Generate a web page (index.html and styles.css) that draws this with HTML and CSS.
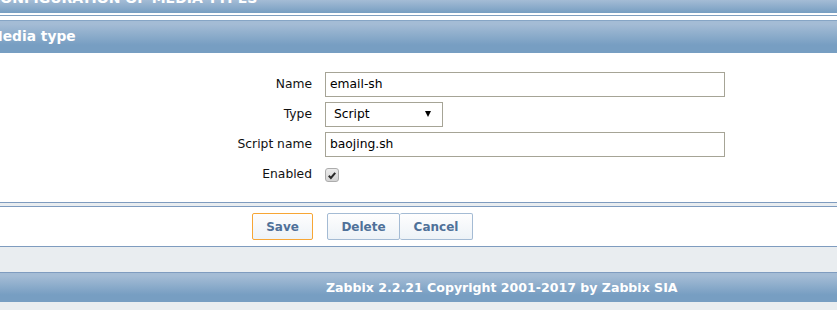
FILE: index.html
```html
<!doctype html>
<html>
    <head>
        <meta charset='utf-8'>
        <title>Configuration of media types</title>
        <link rel="stylesheet" href="styles.css">
    </head>
    <body>
        <div class='page'>
            <div class='title-bar'>
                <h1>CONFIGURATION OF MEDIA TYPES</h1>
            </div>
            <div class='title-line'></div>

            <div class='form-head'>
                <h2>Media type</h2>
            </div>
            <form class='form-body' action=''>
                <div class='row'>
                    <label for='name'>Name</label>
                    <div class='cell'><input id='name' class='text wide' type='text' value='email-sh'></div>
                </div>
                <div class='row'>
                    <label for='type'>Type</label>
                    <div class='cell'>
                        <div class='select' id='type'>
                            <span>Script</span>
                            <span class='arrow'></span>
                        </div>
                    </div>
                </div>
                <div class='row'>
                    <label for='exec'>Script name</label>
                    <div class='cell'><input id='exec' class='text wide' type='text' value='baojing.sh'></div>
                </div>
                <div class='row'>
                    <label>Enabled</label>
                    <div class='cell'>
                        <span class='check'>
                            <svg width='13' height='13' viewBox='0 0 13 13'>
                                <path d='M3 6.8 L5.3 9.2 L10 3.6' fill='none' stroke='#2b2b2b' stroke-width='2.2'/>
                            </svg>
                        </span>
                    </div>
                </div>
            </form>
            <div class='form-gap'></div>
            <div class='form-foot'>
                <button class='btn btn-save'>Save</button>
                <span class='btn-group'>
                    <button class='btn'>Delete</button><button class='btn'>Cancel</button>
                </span>
            </div>

            <div class='footer'>Zabbix 2.2.21 Copyright 2001-2017 by Zabbix SIA</div>
        </div>
    </body>
</html>
```

FILE: styles.css
```css
html,body,h1,h2,p {
    margin:0;
    padding:0;
}
body {
    background:#e9edf0;
    font-family:'DejaVu Sans',Verdana,sans-serif;
    font-size:12px;
    color:#000;
    overflow:hidden;
}
.page {
    width:100%;
}

/* page title, scrolled half out of view */
.title-bar {
    height:13px;
    overflow:hidden;
    background:linear-gradient(#a4bcd5,#779ec2);
    border-bottom:2px solid #fff;
}
.title-bar h1 {
    margin-top:-10px;
    margin-left:-10px;
    font-size:14px;
    line-height:16px;
    color:#fff;
    white-space:nowrap;
}
.title-line {
    height:4px;
    background:#fff;
    border-top:1px solid #7f9fc0;
}

.form-head {
    height:32px;
    background:linear-gradient(#a4bcd5 10%,#779ec2 75%);
    border-top:1px solid #86a5c5;
}
.form-head h2 {
    margin-left:-11px;
    font-size:13.8px;
    line-height:31px;
    color:#fff;
    white-space:nowrap;
}

.form-body {
    background:#fff;
    padding:16px 0 13px;
    border-bottom:1px solid #7f9cbf;
}
.row {
    display:grid;
    grid-template-columns:312px 1fr;
    column-gap:13px;
    height:30px;
    align-items:center;
}
.row label {
    text-align:right;
    color:#111;
    font-size:12.3px;
}
.cell {
    display:flex;
    align-items:center;
}
.text {
    box-sizing:border-box;
    height:25px;
    border:1px solid #a6a496;
    padding:0 4px;
    font-family:'DejaVu Sans',Verdana,sans-serif;
    font-size:12.3px;
    color:#000;
    outline:none;
}
.wide {
    width:400px;
}
.select {
    box-sizing:border-box;
    width:118px;
    height:25px;
    border:1px solid #a6a496;
    padding:0 11px 0 8px;
    font-size:12.3px;
    display:flex;
    align-items:center;
    justify-content:space-between;
}
.arrow {
    width:0;
    height:0;
    border-left:3.5px solid transparent;
    border-right:3.5px solid transparent;
    border-top:6px solid #000;
}
.check {
    box-sizing:border-box;
    width:14px;
    height:14px;
    margin-top:2px;
    border:1px solid #acacac;
    border-radius:3px;
    background:linear-gradient(#ececec,#d4d4d4);
    display:flex;
    align-items:center;
    justify-content:center;
}
.check svg {
    display:block;
}

.form-gap {
    height:3px;
}
.form-foot {
    background:#fff;
    border-top:1px solid #7f9cbf;
    border-bottom:1px solid #7f9cbf;
    height:39px;
    padding-left:252px;
    display:flex;
    align-items:flex-start;
    gap:14px;
}
.btn {
    margin-top:6px;
    height:27px;
    padding:0 12px;
    border:1px solid #a4bbd4;
    border-radius:2px;
    background:linear-gradient(#fefefe,#edf2f7);
    color:#4f7199;
    font-family:'DejaVu Sans',Verdana,sans-serif;
    font-size:12px;
    font-weight:bold;
}
.btn-save {
    width:61px;
    border-color:#f7a635;
}
.btn-group {
    display:flex;
}
.btn-group .btn {
    width:73px;
}
.btn-group .btn + .btn {
    border-left:none;
}

.footer {
    margin-top:25px;
    height:29px;
    border-top:1px solid #7f9cbf;
    background:linear-gradient(#a4bcd5 10%,#779ec2 75%);
    color:#fff;
    font-weight:bold;
    font-size:12.55px;
    line-height:29px;
    padding-left:326px;
    white-space:nowrap;
}
```
